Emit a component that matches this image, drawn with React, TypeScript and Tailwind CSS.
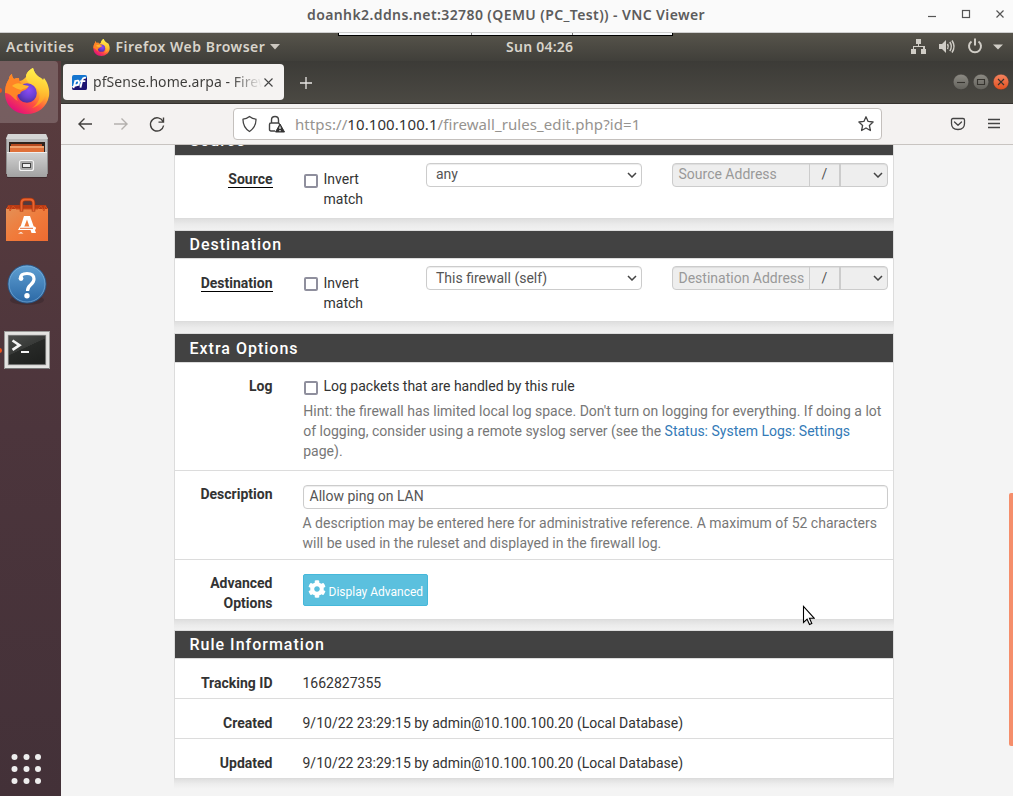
import React from "react";
import { FaCog } from "react-icons/fa";

const Firefox = ({ id, className }: { id: string; className: string }) => (
  <svg viewBox="0 0 46 46" className={className}>
    <defs>
      <linearGradient id={id + "a"} x1="0.8" y1="0.1" x2="0.25" y2="0.95">
        <stop offset="0" stopColor="#fff04a" />
        <stop offset="0.35" stopColor="#ffb52e" />
        <stop offset="0.65" stopColor="#ff5040" />
        <stop offset="1" stopColor="#e2107a" />
      </linearGradient>
      <linearGradient id={id + "b"} x1="0.7" y1="0" x2="0.6" y2="1">
        <stop offset="0" stopColor="#fff44f" />
        <stop offset="0.5" stopColor="#ffcb35" />
        <stop offset="1" stopColor="#ff8a20" />
      </linearGradient>
      <radialGradient id={id + "c"} cx="0.6" cy="0.35" r="0.7">
        <stop offset="0" stopColor="#8c4bf5" />
        <stop offset="0.55" stopColor="#6a3fd0" />
        <stop offset="1" stopColor="#4a2c9a" />
      </radialGradient>
    </defs>
    <path d="M29 0c1 4 3 7 6 9 2 1 3 1 4 3l1-2c4 5 6 12 5 18-2 11-11 18-22 18C10 46 1 37 1 25c0-7 2-11 4-14 0-2 1-4 3-5 0 3 1 4 2 5 2-1 3-1 5-1 0 1 0 2 0 3 2 0 4-1 7-4 0-4 3-7 7-9z" fill={`url(#${id}a)`} />
    <path d="M29 0c1 4 3 7 6 9 6 5 8 12 6 19-2 6-7 10-13 12 6-4 9-10 7-16-2-6-7-6-10-9-2-2-3-4-3-6 0-4 3-7 7-9z" fill={`url(#${id}b)`} />
    <circle cx="23" cy="25" r="9.800" fill={`url(#${id}c)`} />
    <path d="M1 25c0-7 2-11 4-14 0-2 1-4 3-5 0 3 1 4 2 5 2-1 3-1 5-1 0 3 2 6 4 7l5 2c-1 3-4 3-7 5-1 1 0 2-2 2-3 1-3 4-1 7-5-2-7-8-13-8z" fill="#ff8526" />
    <path d="M8 18c4-4 9-3 12-1l5 1c-2 3-6 2-8 4-3-1-6-2-9-4z" fill="#ffb62c" />
  </svg>
);

const Files = () => (
  <svg viewBox="0 0 44 46" className="h-[46px] w-[44px]">
    <defs>
      <linearGradient id="fs" x1="0" y1="0" x2="0" y2="1">
        <stop offset="0" stopColor="#d2d2d2" />
        <stop offset="1" stopColor="#a2a2a2" />
      </linearGradient>
    </defs>
    <path d="M3 1h38l2 4v36H1V5z" fill="#8f8f8f" />
    <path d="M3 1h38l2 5H1z" fill="#d5d5d5" />
    <path d="M2 6h40v14H2z" fill="#b9b9b9" />
    <rect x="4" y="9" width="36" height="12" fill="#30231d" />
    <path d="M6 11h31v2H6z" fill="#b84b20" />
    <path d="M5 13h34v8H5z" fill="#df7039" />
    <path d="M5 14h34" stroke="#ffd1a5" strokeWidth="1.200" />
    <rect x="2" y="19" width="40" height="25" rx="1" fill="url(#fs)" />
    <path d="M2 19.500h40" stroke="#eee" />
    <rect x="14.500" y="27.500" width="14" height="10" rx="2" fill="#aaa" stroke="#f4f4f4" strokeWidth="1.200" />
    <rect x="17.500" y="30.500" width="8" height="4" fill="#eee" stroke="#444" />
    <path d="M2 44.500h40" stroke="#2b2022" opacity="0.500" />
  </svg>
);

const Software = () => (
  <svg viewBox="0 0 44 46" className="h-[46px] w-[44px]">
    <defs>
      <linearGradient id="sw" x1="0" y1="0" x2="1" y2="1">
        <stop offset="0" stopColor="#e49056" />
        <stop offset="0.5" stopColor="#f07b3b" />
        <stop offset="1" stopColor="#ee6b31" />
      </linearGradient>
    </defs>
    <path d="M3 8h38l2 5H1z" fill="#b93b14" />
    <path d="M1 12h42v32H1z" fill="url(#sw)" />
    <path d="M1 12l3-3 1 5 3-5 3 3h22l3-3 3 5 1-5 3 3" fill="none" stroke="#d14d1d" />
    <path d="M16.500 14.500V6q0-3.500 3.500-3.500h5q3.500 0 3.500 3.500v8.500" fill="none" stroke="#a8360f" strokeWidth="3.500" />
    <path d="M16.500 14V6q0-3.500 3.500-3.500h5q3.500 0 3.500 3.500v8" fill="none" stroke="#ea6430" strokeWidth="2" />
    <path d="M19 19h6l6 17h-4.500L22 22.500 18 33h-3.500z" fill="#fff" />
    <path d="M15 29.500h14q2 0 2 1.800t-2 1.700H13M14 36l2-1 2.500 1.500H13z" fill="#fff" />
    <path d="M15 31.300h13" stroke="#e66b35" strokeWidth="1" />
  </svg>
);

const Help = () => (
  <svg viewBox="0 0 42 42" className="h-[42px] w-[42px]">
    <defs>
      <linearGradient id="hp" x1="0" y1="0" x2="0" y2="1">
        <stop offset="0" stopColor="#5f9fd2" />
        <stop offset="1" stopColor="#2b68a5" />
      </linearGradient>
    </defs>
    <ellipse cx="21" cy="36" rx="17" ry="5" fill="#2b1f24" opacity="0.35" />
    <circle cx="21" cy="20" r="19" fill="url(#hp)" stroke="#27578a" />
    <circle cx="21" cy="20" r="18" fill="none" stroke="#8cbbe1" strokeWidth="0.8" opacity="0.7" />
    <path d="M14.500 14q0-4.500 6.500-4.500 7 0 7 5.500 0 3-3.500 6-3 2.500-3 6" fill="none" stroke="#fff" strokeWidth="3.200" />
    <circle cx="15" cy="14.500" r="2.400" fill="#fff" />
    <circle cx="21" cy="31.800" r="2.700" fill="#fff" />
  </svg>
);

const Terminal = () => (
  <svg viewBox="0 0 46 40" className="h-[40px] w-[46px]">
    <defs>
      <linearGradient id="tm" x1="0" y1="0" x2="0.6" y2="1">
        <stop offset="0" stopColor="#4a4c4a" />
        <stop offset="0.5" stopColor="#383a38" />
        <stop offset="0.51" stopColor="#282a28" />
        <stop offset="1" stopColor="#202220" />
      </linearGradient>
    </defs>
    <rect x="0.500" y="1.500" width="45" height="37" fill="#e4e4e2" stroke="#9a9a98" />
    <path d="M1 38.500h44" stroke="#777" />
    <rect x="4" y="5" width="38" height="30" fill="#5c5e5c" stroke="#b5b5b5" strokeWidth="0.500" />
    <rect x="5" y="6" width="36" height="28" fill="url(#tm)" />
    <path d="M8.500 10.500l7 4.700-7 4.700" fill="none" stroke="#f4f4f4" strokeWidth="2.600" />
    <path d="M17 22h8" stroke="#f4f4f4" strokeWidth="2" />
  </svg>
);

const Chevron = () => (
  <svg viewBox="0 0 10 6" className="h-[6px] w-[10px] shrink-0">
    <path d="M1 1l4 4 4-4" fill="none" stroke="#444" strokeWidth="1.500" />
  </svg>
);

const Panel = ({ title, h, children }: { title: string; h: string; children: React.ReactNode }) => (
  <section className="w-[720px] shrink-0 border border-[#dcdcdc] bg-white">
    <h2 className={"flex items-center border-b border-[#dcdcdc] bg-[#424242] pl-[14.5px] text-[16px] font-medium tracking-[1px] text-white " + h}>{title}</h2>
    {children}
  </section>
);

const Row = ({ label, className, children }: { label: React.ReactNode; className: string; children: React.ReactNode }) => (
  <div className={"flex border-[#dcdcdc] " + className}>
    <div className="w-[97.5px] shrink-0 pl-2 text-right font-bold">{label}</div>
    <div className="ml-[30px] w-[585.5px]">{children}</div>
  </div>
);

const Check = () => <span className="mt-[5px] mr-[5.5px] ml-px block h-[14px] w-[14px] shrink-0 rounded-[2px] border-2 border-[#8f8f9d] bg-white" />;

const AddressRow = ({ label, value, placeholder, textPad, valueLine }: { label: string; value: string; placeholder: string; textPad: string; valueLine: string }) => (
  <div className="flex h-[62px]">
    <div className={"w-[97.5px] text-right font-bold " + textPad}>
      <span className="inline-block h-[19px] border-b border-black">{label}</span>
    </div>
    <div className="ml-[30.5px] flex w-[123px] pt-[13px]">
      <Check />
      <span className={"-mt-[13px] w-[60px] " + textPad}>Invert match</span>
    </div>
    <div className="mt-[7px] flex h-[24px] w-[216px] justify-between rounded-[4px] border border-[#ccc] pr-[4px] pl-[9px] text-[#555] shadow-[inset_0_1px_1px_rgba(0,0,0,0.075)]">
      <span className={valueLine}>{value}</span>
      <span className="flex items-center"><Chevron /></span>
    </div>
    <div className="mt-[7px] ml-[30px] flex h-[24px] w-[216px] overflow-hidden rounded-[4px] border border-[#ccc] bg-[#eee] text-[#555] shadow-[inset_0_1px_1px_rgba(0,0,0,0.075)]">
      <div className={"w-[137px] border-r border-[#ccc] pl-[5.5px] whitespace-nowrap text-[#999] " + valueLine}>{placeholder}</div>
      <div className={"w-[31px] border-r-2 border-[#ccc] text-center " + valueLine}>/</div>
      <div className="flex flex-1 items-center justify-end pr-[4px]"><Chevron /></div>
    </div>
  </div>
);

const WinBtn = ({ close, children }: { close?: boolean; children: React.ReactNode }) => (
  <svg viewBox="0 0 16 16" className="h-[16px] w-[16px]">
    <defs>
      <linearGradient id="wg" x1="0" y1="0" x2="0" y2="1"><stop offset="0" stopColor="#8d8b84" /><stop offset="1" stopColor="#62615b" /></linearGradient>
      <linearGradient id="wo" x1="0" y1="0" x2="0" y2="1"><stop offset="0" stopColor="#f58460" /><stop offset="1" stopColor="#e0501f" /></linearGradient>
    </defs>
    <circle cx="8" cy="8" r="7.800" fill={close ? "url(#wo)" : "url(#wg)"} stroke="#34332f" strokeWidth="0.400" />
    <g fill="none" stroke="#35332e" strokeWidth="1.100">{children}</g>
  </svg>
);

const Gap = ({ h }: { h: string }) => <div className={"shrink-0 bg-linear-to-b from-[#dfdfdf] via-[#ebebeb] to-[#f1f1f1] " + h} />;

export default function App() {
  return (
    <div className="relative flex h-[796px] w-[1013px] flex-col overflow-hidden bg-[#f4f4f4] font-['Roboto',sans-serif] text-[14px] leading-[20px] text-[#333]">
      <header className="flex h-[33px] shrink-0 items-center border-b border-[#cfcfcf] bg-[#fafafa]">
        <div className="w-[1013px] pl-[307px] font-['Noto_Sans',sans-serif] text-[14px] font-semibold whitespace-nowrap text-[#5c5c5c]">
          <span className="-mt-[3px] block tracking-[0.4px]">doanhk2.ddns.net:32780 (QEMU (PC_Test)) - VNC Viewer</span>
        </div>
        <svg viewBox="0 0 86 16" className="absolute top-[6px] left-[923px] h-[16px] w-[86px]" fill="none" stroke="#555" strokeWidth="1.200">
          <path d="M5 10.500h8" /><rect x="39.500" y="4.500" width="7" height="7" /><path d="M73.500 4.500l7 7M80.500 4.500l-7 7" />
        </svg>
      </header>

      <div className="flex h-[28px] shrink-0 items-center bg-linear-to-b from-[#57544b] to-[#403f3a] font-['Noto_Sans',sans-serif] text-[14px] font-semibold whitespace-nowrap text-[#d8d4cb]">
        <span className="w-[87px] pl-[6px] tracking-[0.6px]">Activities</span>
        <span className="w-[28.5px] pl-[6px]"><Firefox id="f1" className="h-[17px] w-[17px]" /></span>
        <span className="w-[154.5px] tracking-[0.5px]">Firefox Web Browser</span>
        <svg viewBox="0 0 10 6" className="h-[6px] w-[10px]"><path d="M0 0h10L5 5.500z" fill="#ccc8c0" /></svg>
        <span className="-mt-px ml-[226px] flex-1 tracking-[0.250px]">Sun 04:26</span>
        <svg viewBox="0 0 94 18" className="mr-[9px] h-[18px] w-[94px]" fill="#d0cdc6">
          <path d="M6 1h5v5H9v2h6v3h1v5h-5v-5h2V9H4v2h2v5H1v-5h2V8h5V6H6z" />
          <path d="M29 6h3l4-4v13l-4-4h-3z" />
          <path d="M37.500 6q1.500 2.500 0 5M39.800 4q3 4.500 0 9M42 2.500q4 6 0 12" fill="none" stroke="#d0cdc6" strokeWidth="1.500" />
          <path d="M61.500 3.500a6 6 0 1 0 7 0M65 .5v7" fill="none" stroke="#d0cdc6" strokeWidth="2" />
          <path d="M83 6.500h10l-5 5z" />
        </svg>
      </div>
      <div className="absolute top-[33px] left-[338px] flex h-[3px] w-[335px] border border-t-0 border-black bg-[#f7f9fb]">
        <span className="w-[133px] border-r border-[#777]" />
        <span className="w-[101px] border-r border-[#777]" />
      </div>

      <div className="flex min-h-0 flex-1">
        <aside className="relative flex w-[61px] shrink-0 flex-col bg-linear-to-b from-[#5a3c3e] via-[#4c353c] to-[#433138]">
          <div className="flex h-[62px] w-[58px] items-center rounded-r-[4px] bg-white/18 pb-[3px] pl-[4px]">
            <span className="absolute left-[-3px] h-[5px] w-[5px] rounded-full bg-[#e95420]" />
            <Firefox id="f2" className="h-[46px] w-[46px]" />
          </div>
          <div className="mt-[10px] ml-[5px]"><Files /></div>
          <div className="mt-[18px] ml-[5px] h-[46px]"><Software /></div>
          <div className="mt-[21px] ml-[6px] h-[42px]"><Help /></div>
          <div className="mt-[24px] flex h-[40px] items-center pl-[4px]">
            <span className="absolute left-[-3px] h-[5px] w-[5px] rounded-full bg-[#e95420]" />
            <Terminal />
          </div>
          <svg viewBox="0 0 32 32" className="mt-auto mb-[11px] ml-[11px] h-[32px] w-[32px]" fill="#eee">
            {[4, 16, 28].map((y) => [3.5, 15.500, 27].map((x) => <circle key={x + "-" + y} cx={x} cy={y} r="3" />))}
          </svg>
        </aside>

        <div className="flex min-w-0 flex-1 flex-col">
          <div className="flex h-[43px] shrink-0 border-b border-[#35322f] bg-linear-to-b from-[#3c3b37] to-[#4b4943] font-['Noto_Sans',sans-serif]">
            <div className="mt-[3px] ml-[2px] flex h-[36px] w-[221px] items-center rounded-[4px] bg-[#f5f3f2] pl-[9px]">
              <svg viewBox="0 0 16 16" className="h-[15px] w-[15px]">
                <path d="M0 2q0-2 2-2h12q2 0 2 2v4L9 10 0 12z" fill="#1475cf" />
                <path d="M16 3v11q0 2-2 2H2q-2 0-2-2v-1l9-2 3-8z" fill="#1c1470" />
                <g fill="none" stroke="#fff" strokeWidth="2"><path d="M1.500 14L3.800 5.500M3.500 6.500q4-1.500 4 1.500-.5 3.500-4.500 2.800M9 13.500l2-8.500q.7-2.500 3.800-2M8.700 6.500h5.500" /></g>
              </svg>
              <div className="ml-[6px] w-[169px] bg-linear-to-r from-[#3d3c3a] from-[82%] to-transparent bg-clip-text text-[14px] tracking-[0.050px] whitespace-nowrap text-transparent">pfSense.home.arpa - Firew</div>
              <svg viewBox="0 0 9 9" className="ml-[2px] h-[9px] w-[9px]"><path d="M.5.5l8 8M8.500.5l-8 8" stroke="#444" strokeWidth="1.100" /></svg>
            </div>
            <svg viewBox="0 0 12 12" className="mt-[16px] ml-[16px] h-[12px] w-[12px]"><path d="M6 0v12M0 6h12" stroke="#e8e6e3" strokeWidth="1.300" /></svg>
            <div className="mt-[13px] mr-[4px] ml-auto flex gap-[4px]">
              <WinBtn><path d="M4 8.500h8" /></WinBtn>
              <WinBtn><path d="M4.500 5.500h7v5h-7z" /></WinBtn>
              <WinBtn close><path d="M5 5l6 6M11 5l-6 6" /></WinBtn>
            </div>
          </div>

          <div className="flex h-[41px] shrink-0 items-center border-b border-[#c8c4c1] bg-[#f4f2f1] font-['Noto_Sans',sans-serif]">
            <svg viewBox="0 0 90 18" className="ml-[16px] h-[18px] w-[90px]" fill="none" stroke="#42403e" strokeWidth="1.400">
              <path d="M15 9H1.500M7.500 3.500L2 9l5.500 5.500" />
              <path d="M37 9h13.500M44.500 3.500L50 9l-5.500 5.500" stroke="#b4b1ae" />
              <path d="M86 6.500A6.600 6.600 0 1 0 86.600 10.500M86.500 2.500v4.600h-5" />
            </svg>
            <div className="ml-[66px] flex h-[32px] w-[649px] items-center rounded-[4px] border border-[#c4c0bd] bg-white pl-[8px]">
              <svg viewBox="0 0 16 18" className="h-[18px] w-[16px]" fill="none" stroke="#444" strokeWidth="1.300">
                <path d="M7.500 1.500Q10.500 4 14 4.200 14.300 12 7.500 16.500.8 12 1 4.200 4.500 4 7.500 1.500z" strokeLinejoin="round" />
              </svg>
              <svg viewBox="0 0 18 18" className="ml-[10px] h-[18px] w-[18px]">
                <path d="M3.500 8V5q0-3.500 3.500-3.500T10.500 5v3M7 16H3q-1.500 0-1.500-1.500V9.500Q1.500 8 3 8h7q1.500 0 1.500 1.500" fill="none" stroke="#444" strokeWidth="1.400" />
                <path d="M12 9l4.500 8h-9z" fill="#333" stroke="#333" strokeLinejoin="round" />
                <path d="M12 11.500v2.500M12 15v1.300" stroke="#fff" strokeWidth="1.200" />
              </svg>
              <span className="ml-[9px] flex-1 text-[15px] tracking-[0.080px] whitespace-nowrap text-[#96938f]">https://<span className="text-[#333]">10.100.100.1</span>/firewall_rules_edit.php?id=1</span>
              <svg viewBox="0 0 18 18" className="mr-[6px] h-[18px] w-[18px]"><path d="M9 1.800l2.100 4.600 5 .6-3.700 3.500 1 5L9 13l-4.400 2.500 1-5L1.900 7l5-.6z" fill="none" stroke="#444" strokeWidth="1.300" strokeLinejoin="round" /></svg>
            </div>
            <svg viewBox="0 0 52 16" className="ml-[68px] h-[16px] w-[52px]" fill="none" stroke="#444" strokeWidth="1.300">
              <path d="M3 2.500h10q1.500 0 1.500 1.500v3.500q0 6-6.500 6t-6.500-6V4q0-1.500 1.500-1.500zM4.500 6l3.500 3.300L11.500 6" strokeLinejoin="round" strokeLinecap="round" />
              <path d="M38 3.500h12M38 7.500h12M38 11.500h12" />
            </svg>
          </div>

          <main className="relative min-h-0 flex-1 overflow-hidden">
            <div className="-mt-[18px] ml-[113px] flex w-[720px] flex-col">
              <Panel title="Source" h="h-[28px] pb-[2px]">
                <AddressRow label="Source" value="any" placeholder="Source Address" textPad="pt-[13px]" valueLine="leading-[20px]" />
              </Panel>
              <Gap h="h-[11px]" />
              <Panel title="Destination" h="h-[28px]">
                <AddressRow label="Destination" value="This firewall (self)" placeholder="Destination Address" textPad="pt-[14px]" valueLine="leading-[22px]" />
              </Panel>
              <Gap h="h-[11px]" />
              <Panel title="Extra Options" h="h-[29px] pt-px">
                <Row label="Log" className="h-[108px] border-b pt-[13px]">
                  <div className="ml-[0.5px] flex"><Check />Log packets that are handled by this rule</div>
                  <p className="mt-[5px] ml-[0.750px] text-[#777]">Hint: the firewall has limited local log space. Don't turn on logging for everything. If doing a lot of logging, consider using a remote syslog server (see the <span className="text-[#337ab7]">Status: System Logs: Settings</span> page).</p>
                </Row>
                <Row label="Description" className="h-[89px] border-b pt-[13px]">
                  <div className="mt-px ml-[0.5px] h-[24px] rounded-[4px] border border-[#ccc] pl-[5.5px] leading-[20px] text-[#555] shadow-[inset_0_1px_1px_rgba(0,0,0,0.075)]">Allow ping on LAN</div>
                  <p className="mt-[4px] text-[#777]">A description may be entered here for administrative reference. A maximum of 52 characters will be used in the ruleset and displayed in the firewall log.</p>
                </Row>
                <Row label="Advanced Options" className="h-[59px] pt-[13px]">
                  <button className="mt-px ml-[0.5px] flex h-[32px] w-[125px] rounded-[2px] border border-[#46b8da] bg-[#5bc0de] pl-[4px] text-[12px] text-white">
                    <FaCog className="mt-[5px] h-[18px] w-[18px]" />
                    <span className="mt-[7px] ml-[2.5px] whitespace-nowrap">Display Advanced</span>
                  </button>
                </Row>
              </Panel>
              <Gap h="h-[10px]" />
              <Panel title="Rule Information" h="h-[28px]">
                <Row label="Tracking ID" className="h-[40px] border-b pt-[14px]">1662827355</Row>
                <Row label="Created" className="h-[40px] border-b pt-[14px]">9/10/22 23:29:15 by admin@10.100.100.20 (Local Database)</Row>
                <Row label="Updated" className="h-[39px] pt-[14px]">9/10/22 23:29:15 by admin@10.100.100.20 (Local Database)</Row>
              </Panel>
              <div className="h-[10px] bg-linear-to-b from-[#dfdfdf] via-[#ededed] to-[#f4f4f4]" />
            </div>
            <div className="absolute top-[348px] right-0 h-[253px] w-[4px] rounded-l-[2px] bg-[#f58e6b]" />
          </main>
        </div>
      </div>

      <svg viewBox="0 0 13 21" className="absolute top-[605px] left-[802px] h-[21px] w-[13px]">
        <path d="M1.500 1.500v16l3.600-3.300 2.400 5.300 2.300-1-2.300-5.200h4.800z" fill="#fff" stroke="#000" strokeWidth="1.100" />
      </svg>
    </div>
  );
}
